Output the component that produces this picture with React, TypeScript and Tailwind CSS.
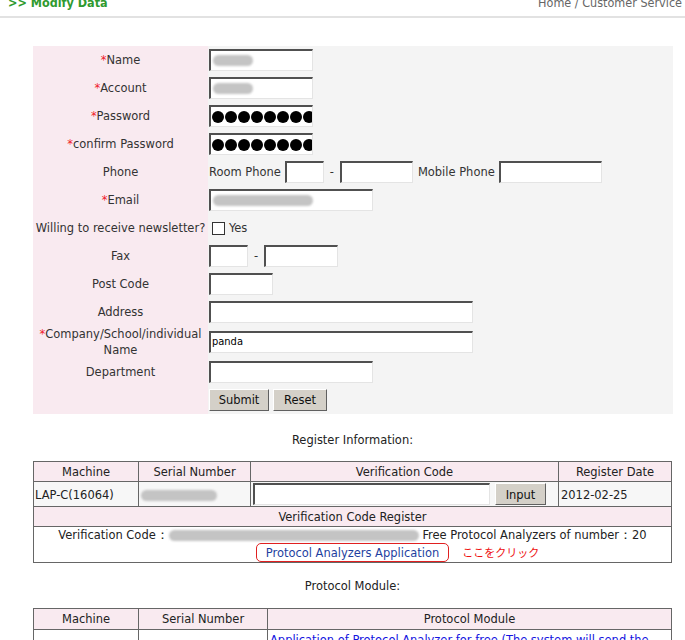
import React from "react";

const inputCls =
  "h-[22px] bg-white border-t-2 border-l-2 border-b border-r border-t-[#505050] border-l-[#505050] border-b-[#e4e4e4] border-r-[#e4e4e4] overflow-hidden flex items-center";

function Blob({ w }: { w: number }) {
  return (
    <span
      className="inline-block h-[11px] rounded-full bg-[#c4c4c4] blur-[1px] align-middle"
      style={{ width: w }}
    />
  );
}

function Dots() {
  return (
    <div className="flex gap-[1px] pl-[1px] whitespace-nowrap">
      {Array.from({ length: 9 }).map((_, i) => (
        <span key={i} className="inline-block w-[12px] h-[12px] rounded-full bg-black shrink-0" />
      ))}
    </div>
  );
}

function Row({
  label,
  req,
  h = "h-[28px]",
  children,
}: {
  label: React.ReactNode;
  req?: boolean;
  h?: string;
  children?: React.ReactNode;
}) {
  return (
    <div className={`flex ${h}`}>
      <div className="w-[175px] bg-[#f9eaf0] flex items-center justify-center text-center leading-[16px] text-[#333]">
        <span>
          {req && <span className="text-[#f0202a]">*</span>}
          {label}
        </span>
      </div>
      <div className="flex-1 bg-[#f4f4f4] flex items-center pl-[1px] gap-[4px] text-[#333]">{children}</div>
    </div>
  );
}

function Btn({ children, w }: { children: React.ReactNode; w: string }) {
  return (
    <div
      className={`${w} h-[22px] bg-[#d4d0c8] border border-t-white border-l-white border-b-[#606060] border-r-[#606060] flex items-center justify-center text-[#111]`}
    >
      {children}
    </div>
  );
}

export default function App() {
  return (
    <div className="w-[685px] h-[640px] overflow-hidden bg-white text-[12.75px] font-['DejaVu_Sans_Condensed','Liberation_Sans',sans-serif]">
      <div className="h-[18px] border-b-2 border-[#e2e2e2] flex justify-between pl-[8px] pr-[3px]">
        <span className="-mt-[6px] font-bold text-[#2f9a2f] text-[12.5px]">&gt;&gt; Modify Data</span>
        <span className="-mt-[6px] text-[#666] text-[12.5px]">Home / Customer Service</span>
      </div>

      <div className="mt-[28px] ml-[33px] w-[640px]">
        <Row label="Name" req>
          <div className={`${inputCls} w-[104px] pl-[2px]`}><Blob w={40} /></div>
        </Row>
        <Row label="Account" req>
          <div className={`${inputCls} w-[104px] pl-[2px]`}><Blob w={40} /></div>
        </Row>
        <Row label="Password" req>
          <div className={`${inputCls} w-[104px]`}><Dots /></div>
        </Row>
        <Row label="confirm Password" req>
          <div className={`${inputCls} w-[104px]`}><Dots /></div>
        </Row>
        <Row label="Phone">
          <span>Room Phone</span>
          <div className={`${inputCls} w-[39px]`} />
          <span className="px-[2px]">-</span>
          <div className={`${inputCls} w-[73px]`} />
          <span className="pl-[1px]">Mobile Phone</span>
          <div className={`${inputCls} w-[103px]`} />
        </Row>
        <Row label="Email" req>
          <div className={`${inputCls} w-[164px] pl-[2px]`}><Blob w={100} /></div>
        </Row>
        <Row label="Willing to receive newsletter?">
          <span className="ml-[3px] w-[13px] h-[13px] border border-[#333] bg-white" />
          <span>Yes</span>
        </Row>
        <Row label="Fax">
          <div className={`${inputCls} w-[39px]`} />
          <span className="px-[2px]">-</span>
          <div className={`${inputCls} w-[74px]`} />
        </Row>
        <Row label="Post Code">
          <div className={`${inputCls} w-[64px]`} />
        </Row>
        <Row label="Address">
          <div className={`${inputCls} w-[264px]`} />
        </Row>
        <Row
          label={
            <>
              Company/School/individual
              <br />
              Name
            </>
          }
          req
          h="h-[32px]"
        >
          <div className={`${inputCls} w-[264px] text-[11px] text-black pl-[1px]`}>panda</div>
        </Row>
        <Row label="Department">
          <div className={`${inputCls} w-[164px]`} />
        </Row>
        <Row label="">
          <Btn w="w-[60px]">Submit</Btn>
          <Btn w="w-[54px]">Reset</Btn>
        </Row>
      </div>

      <div className="mt-[16px] text-center text-[#222] ml-[20px]">Register Information:</div>

      <table className="mt-[12px] ml-[33px] w-[639px] border-collapse text-[#222]">
        <tbody>
          <tr className="h-[20px] bg-[#f9eaf0] text-center">
            <td className="border border-[#666] w-[105px]">Machine</td>
            <td className="border border-[#666] w-[112px]">Serial Number</td>
            <td className="border border-[#666] w-[308px]">Verification Code</td>
            <td className="border border-[#666]">Register Date</td>
          </tr>
          <tr className="h-[25px] bg-[#f7f7f7]">
            <td className="border border-[#666] px-[1px]">LAP-C(16064)</td>
            <td className="border border-[#666] px-[2px]"><Blob w={76} /></td>
            <td className="border border-[#666] px-[2px]">
              <div className="flex items-center gap-[5px]">
                <div className={`${inputCls} w-[237px]`} />
                <Btn w="w-[51px]">Input</Btn>
              </div>
            </td>
            <td className="border border-[#666] px-[2px]">2012-02-25</td>
          </tr>
          <tr className="h-[20px] bg-[#f9eaf0] text-center">
            <td colSpan={4} className="border border-[#666]">Verification Code Register</td>
          </tr>
          <tr className="h-[35px] bg-white text-center">
            <td colSpan={4} className="border border-[#666] leading-[16px]">
              <div>
                Verification Code：<Blob w={250} /> Free Protocol Analyzers of number：20
              </div>
              <div className="flex justify-center">
                <span className="relative border border-[#e02020] rounded-[5px] px-[9px] h-[19px] leading-[17px] text-[#1f3f9f]">
                  Protocol Analyzers Application
                  <span className="absolute left-full top-0 ml-[14px] whitespace-nowrap text-[11px] text-[#ee1111] font-['Noto_Sans_CJK_JP',sans-serif]">
                    ここをクリック
                  </span>
                </span>
              </div>
            </td>
          </tr>
        </tbody>
      </table>

      <div className="mt-[13px] text-center text-[#222] ml-[20px]">Protocol Module:</div>

      <table className="mt-[12px] ml-[33px] w-[639px] border-collapse text-[#222]">
        <tbody>
          <tr className="h-[21px] bg-[#f9eaf0] text-center">
            <td className="border border-[#666] w-[105px]">Machine</td>
            <td className="border border-[#666] w-[129px]">Serial Number</td>
            <td className="border border-[#666]">Protocol Module</td>
          </tr>
          <tr className="h-[30px] align-top">
            <td className="border border-[#666]"></td>
            <td className="border border-[#666]"></td>
            <td className="border border-[#666] text-[#1515e0] px-[2px] whitespace-nowrap overflow-hidden">
              Application of Protocol Analyzer for free (The system will send the ...
            </td>
          </tr>
        </tbody>
      </table>
    </div>
  );
}
